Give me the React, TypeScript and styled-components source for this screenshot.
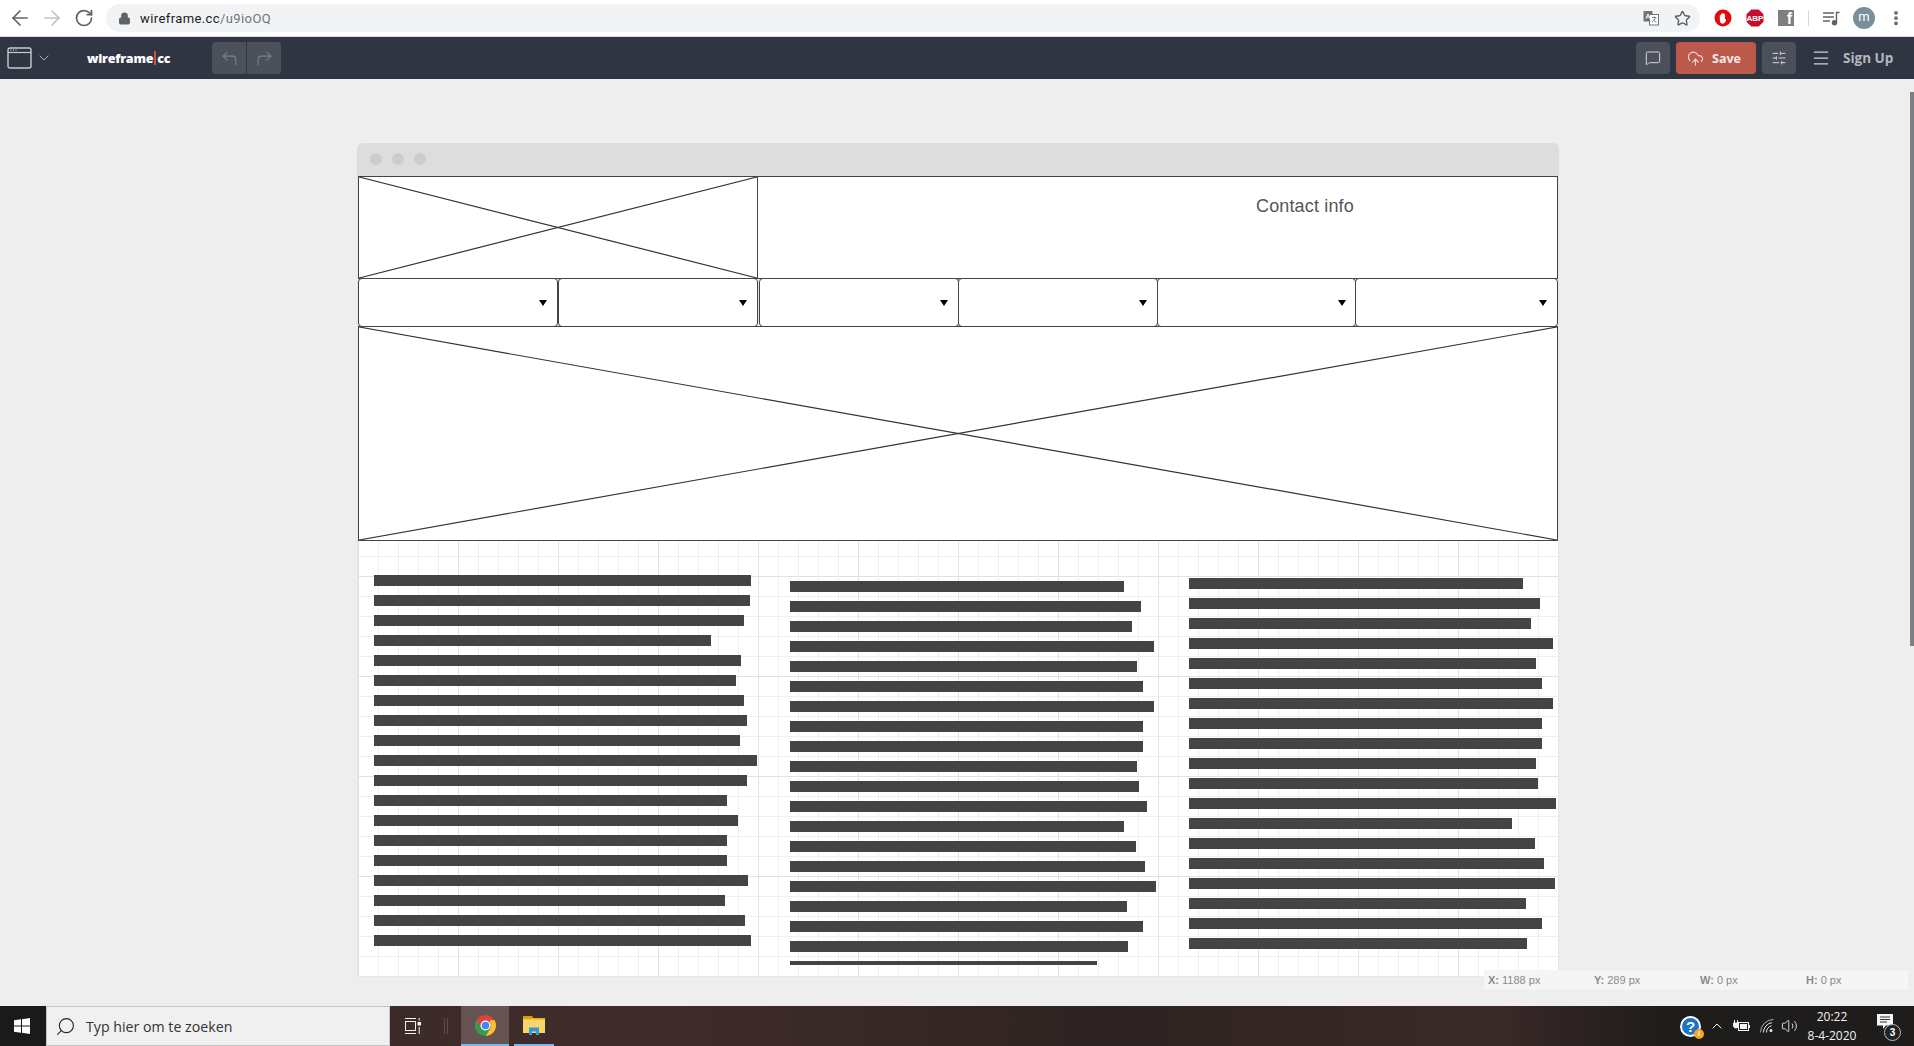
import styled, { createGlobalStyle } from "styled-components";
import {
  ArrowLeft,
  ArrowRight,
  ChevronDown,
  ChevronUp,
  CornerUpLeft,
  CornerUpRight,
  Lock,
  Menu,
  MessageSquare,
  MoreVertical,
  RotateCw,
  Search,
  SlidersHorizontal,
  Star,
  UploadCloud,
  Volume2,
} from "lucide-react";

const GlobalStyle = createGlobalStyle`
  html, body {
    margin: 0;
    padding: 0;
    overflow: hidden;
    background: #eee;
  }
`;

// right edges of the text bars, in page pixels
const COLUMNS = [
  {
    left: 374,
    top: 34,
    indent: 16,
    rights: [751, 750, 744, 711, 741, 736, 744, 747, 740, 757, 747, 727, 738, 727, 727, 748, 725, 745, 751],
  },
  {
    left: 790,
    top: 40,
    indent: 0,
    rights: [1124, 1141, 1132, 1154, 1137, 1143, 1154, 1143, 1143, 1137, 1139, 1147, 1124, 1136, 1145, 1156, 1127, 1143, 1128],
  },
  {
    left: 1189,
    top: 37,
    indent: 0,
    rights: [1523, 1540, 1531, 1553, 1536, 1542, 1553, 1542, 1542, 1536, 1538, 1556, 1512, 1535, 1544, 1555, 1526, 1542, 1527],
  },
];

const DROPDOWNS = [
  { width: 200, shift: 0, caret: 10 },
  { width: 200, shift: 0, caret: 10 },
  { width: 200, shift: 1, caret: 10 },
  { width: 200, shift: -1, caret: 10 },
  { width: 199, shift: -1, caret: 9 },
  { width: 203, shift: -1, caret: 10 },
];

function CrossLines() {
  return (
    <CrossSvg viewBox="0 0 100 100" preserveAspectRatio="none">
      <line x1="0" y1="0" x2="100" y2="100" vectorEffect="non-scaling-stroke" />
      <line x1="0" y1="100" x2="100" y2="0" vectorEffect="non-scaling-stroke" />
    </CrossSvg>
  );
}

function ChromeLogo() {
  return (
    <svg width="23" height="23" viewBox="0 0 48 48">
      <circle cx="24" cy="24" r="22" fill="#db4437" />
      <path d="M43 13A22 22 0 0 1 24 46l11-18-2-15z" fill="#fbc02d" />
      <path d="M5 13A22 22 0 0 0 24 46l11-19H14z" fill="#2e9e4f" />
      <circle cx="24" cy="24" r="10.500" fill="#fff" />
      <circle cx="24" cy="24" r="8" fill="#4285f4" />
    </svg>
  );
}

function WindowIcon() {
  return (
    <svg width="25" height="22" viewBox="0 0 25 22" fill="none">
      <rect x="1" y="1" width="23" height="20" rx="2" stroke="#c9cbce" strokeWidth="1.4" />
      <path d="M1 5.500h23" stroke="#c9cbce" strokeWidth="1.2" />
      <path d="M3.500 3.200h1M6 3.200h1M8.500 3.200h1" stroke="#c9cbce" strokeWidth="1.2" />
    </svg>
  );
}

function StopHand() {
  return (
    <svg width="18" height="18" viewBox="0 0 18 18">
      <circle cx="9" cy="9" r="8.500" fill="#e00b0b" />
      <path
        d="M5.800 9.500V6.600c0-.9 1.200-.9 1.200 0V5.200c0-.9 1.300-.9 1.300 0v-.6c0-.9 1.300-.9 1.300 0v.8c0-.8 1.300-.8 1.300 0v5.200c.3-.7 1.500-.5 1.200.4-.5 1.500-1.300 3.700-3.400 3.700-2.500 0-2.900-1.800-2.900-5.200z"
        fill="#fff"
      />
    </svg>
  );
}

function AbpBadge() {
  return (
    <svg width="18" height="18" viewBox="0 0 18 18">
      <polygon points="5.300,0.500 12.700,0.500 17.500,5.300 17.500,12.700 12.700,17.500 5.300,17.500 0.500,12.700 0.500,5.300" fill="#c70d2c" />
      <text x="9" y="12" textAnchor="middle" fontFamily="Liberation Sans, sans-serif" fontWeight="700" fontSize="8" fill="#fff">
        ABP
      </text>
    </svg>
  );
}

function TranslateIcon() {
  return (
    <svg width="16" height="16" viewBox="0 0 16 16">
      <rect x="0.500" y="1" width="9" height="10.500" fill="#70757a" />
      <rect x="6.500" y="4.500" width="9" height="10.500" fill="#fff" stroke="#70757a" />
      <path d="M3 8.500l2-4.500 2 4.500M3.700 7h2.600" stroke="#fff" strokeWidth="1" fill="none" />
      <path d="M9 7.500h4.500M11.200 6.500v1M12.500 7.500c-.5 2-2 3.500-3.500 4.500M10 9.500c.7 1.200 1.800 2 3.500 2.500" stroke="#70757a" strokeWidth="0.900" fill="none" />
    </svg>
  );
}

function PlaylistIcon() {
  return (
    <svg width="17" height="15" viewBox="0 0 17 15" fill="none" stroke="#5f6368" strokeWidth="1.400">
      <path d="M0 2h11M0 6h11M0 10h7" />
      <path d="M13.500 11.500V1.500h3" />
      <circle cx="11.500" cy="11.800" r="2" fill="#5f6368" />
    </svg>
  );
}

function TaskViewIcon() {
  return (
    <svg width="16" height="16" viewBox="0 0 16 16" fill="none" stroke="#f2f2f2" strokeWidth="1">
      <path d="M0 .5h11M0 15.500h11" />
      <rect x="0.500" y="3.500" width="10" height="9" />
      <rect x="13" y="4.500" width="2.500" height="2.500" fill="#f2f2f2" />
      <path d="M14.200 0v2.500M14.200 9v7" />
    </svg>
  );
}

function WindowsLogo() {
  return (
    <svg width="16" height="16" viewBox="0 0 16 16" fill="#fff">
      <path d="M0 2.300l7-1V7.500H0zM8 1.200L16 0v7.500H8zM0 8.500h7v6.200l-7-1zM8 8.500h8V16l-8-1.200z" />
    </svg>
  );
}

function FolderIcon() {
  return (
    <svg width="22" height="22" viewBox="0 0 22 22">
      <path d="M0 2h9l1.500 2H0z" fill="#d99a06" />
      <rect x="0" y="4" width="22" height="15" fill="#f8d568" />
      <rect x="0" y="4" width="22" height="1.500" fill="#e8ab15" />
      <path d="M6 21v-7.500h10V21h-3v-3.500H9V21z" fill="#2f9ad8" />
    </svg>
  );
}

function BatteryPlug() {
  return (
    <svg width="17" height="13" viewBox="0 0 17 13" fill="none" stroke="#f2f2f2">
      <path d="M1.500 0v3M4.500 0v3M0.500 3h5v2.500a2.500 2.500 0 0 1-5 0z" fill="#f2f2f2" />
      <rect x="5.500" y="2.500" width="10" height="8" />
      <rect x="7" y="4" width="7" height="5" fill="#f2f2f2" stroke="none" />
      <path d="M16.500 5v3" />
    </svg>
  );
}

function TrayWifi() {
  return (
    <svg width="14" height="14" viewBox="0 0 14 14" fill="none" stroke="#e8e8e8">
      <path d="M0.500 13.500A13 13 0 0 1 13.500 .5" opacity="0.7" />
      <path d="M3.500 13.500A10 10 0 0 1 12 3.600" />
      <path d="M6.500 13.500A7 7 0 0 1 11.500 6.800" />
      <circle cx="11" cy="11.500" r="1.500" fill="#e8e8e8" stroke="none" />
    </svg>
  );
}

function NotifyBubble() {
  return (
    <svg width="16" height="16" viewBox="0 0 16 16">
      <path d="M0 0h16v11.500H9L6 15v-3.500H0z" fill="#f5f5f5" />
      <path d="M3 3h10M3 5.500h10M3 8h7" stroke="#333" strokeWidth="1" />
    </svg>
  );
}

export default function App() {
  return (
    <>
      <GlobalStyle />
      <Page>
        <BrowserBar>
          <NavButton $left={8}><ArrowLeft size={24} color="#5f6368" strokeWidth={1.7} /></NavButton>
          <NavButton $left={8}><ArrowRight size={24} color="#c0c2c5" strokeWidth={1.7} /></NavButton>
          <NavButton $left={10}><RotateCw size={20} color="#5f6368" strokeWidth={2.1} /></NavButton>
          <UrlPill>
            <Lock size={13} color="#5f6368" fill="#5f6368" />
            <UrlText>
              wireframe.cc<UrlPath>/u9ioOQ</UrlPath>
            </UrlText>
            <UrlActions>
              <TranslateIcon />
              <Star size={17} color="#5f6368" strokeWidth={2} />
            </UrlActions>
          </UrlPill>
          <Extensions>
            <StopHand />
            <AbpBadge />
            <FacebookTile>f</FacebookTile>
            <BarDivider />
            <PlaylistIcon />
            <Avatar>m</Avatar>
            <MoreDots size={18} color="#5f6368" strokeWidth={3} />
          </Extensions>
        </BrowserBar>

        <AppToolbar>
          <WindowIcon />
          <WindowChevron size={16} color="#aeb1b6" strokeWidth={1.5} />
          <Logo>
            wireframe<LogoBar />cc
          </Logo>
          <UndoGroup>
            <UndoButton><CornerUpLeft size={19} color="#7e828a" strokeWidth={1.3} /></UndoButton>
            <UndoButton $divided><CornerUpRight size={19} color="#7e828a" strokeWidth={1.3} /></UndoButton>
          </UndoGroup>
          <ToolbarRight>
            <ToolButton><MessageSquare size={16} color="#d5d7da" strokeWidth={1.5} /></ToolButton>
            <SaveButton>
              <UploadCloud size={17} color="#f3dcd8" strokeWidth={1.6} />
              Save
            </SaveButton>
            <ToolButton><SlidersHorizontal size={16} color="#d5d7da" strokeWidth={1.5} /></ToolButton>
            <MenuIcon><Menu size={20} color="#d0d2d5" strokeWidth={1.5} /></MenuIcon>
            <SignUp>Sign Up</SignUp>
          </ToolbarRight>
        </AppToolbar>

        <Workspace>
          <WireWindow>
            <TitleBar>
              <Dot />
              <Dot />
              <Dot />
            </TitleBar>
            <Canvas>
              <HeaderRow>
                <LogoBox>
                  <CrossLines />
                </LogoBox>
                <ContactBox>Contact info</ContactBox>
              </HeaderRow>
              <NavRow>
                {DROPDOWNS.map((item, index) => (
                  <Dropdown key={index} $width={item.width} $shift={item.shift} $caret={item.caret}>
                    <Caret />
                  </Dropdown>
                ))}
              </NavRow>
              <Hero>
                <CrossLines />
              </Hero>
              <TextArea>
                {COLUMNS.map((column, index) => (
                  <TextColumn key={index} $top={column.top} $indent={column.indent}>
                    {column.rights.map((right, row) => (
                      <TextBar key={row} $width={right - column.left} />
                    ))}
                    {index === 1 && <ThinBar />}
                  </TextColumn>
                ))}
              </TextArea>
            </Canvas>
          </WireWindow>
          <StatusBar>
            <StatusItem><b>X:</b> 1188 px</StatusItem>
            <StatusItem><b>Y:</b> 289 px</StatusItem>
            <StatusItem><b>W:</b> 0 px</StatusItem>
            <StatusItem><b>H:</b> 0 px</StatusItem>
          </StatusBar>
          <ScrollThumb />
        </Workspace>

        <Taskbar>
          <StartTile><WindowsLogo /></StartTile>
          <SearchBox>
            <SearchGlass size={21} color="#222" strokeWidth={1.2} />
            Typ hier om te zoeken
          </SearchBox>
          <TaskIcon $width={46} $left={0}><TaskViewIcon /></TaskIcon>
          <TaskSeparator />
          <TaskIcon $width={48} $left={13} $open $active><ChromeLogo /></TaskIcon>
          <TaskIcon $width={40} $left={5} $open><FolderIcon /></TaskIcon>
          <Tray>
            <TrayItem $width={23} $left={0}>
              <HelpBadge>?<HelpDot>i</HelpDot></HelpBadge>
            </TrayItem>
            <TrayItem $width={16} $left={7}><ChevronUp size={18} color="#f2f2f2" strokeWidth={1.5} /></TrayItem>
            <TrayItem $width={17} $left={8}><BatteryPlug /></TrayItem>
            <TrayItem $width={14} $left={10}><TrayWifi /></TrayItem>
            <TrayItem $width={17} $left={7}><Volume2 size={18} color="#e8e8e8" strokeWidth={1.3} /></TrayItem>
            <Clock>
              <span>20:22</span>
              <span>8-4-2020</span>
            </Clock>
            <Notify>
              <NotifyBubble />
              <NotifyCount>3</NotifyCount>
            </Notify>
          </Tray>
        </Taskbar>
      </Page>
    </>
  );
}

const Page = styled.div`
  width: 1914px;
  height: 1046px;
  display: flex;
  flex-direction: column;
  overflow: hidden;
  background: #eee;
  font-family: "Liberation Sans", Arial, sans-serif;
`;

const BrowserBar = styled.div`
  height: 37px;
  flex: none;
  display: flex;
  align-items: center;
  background: #fff;
  box-sizing: border-box;
  border-bottom: 1px solid #d9dadc;
`;

const NavButton = styled.div<{ $left: number }>`
  display: flex;
  margin-left: ${({ $left }) => $left}px;
`;

const UrlPill = styled.div`
  width: 1594px;
  height: 28px;
  margin-left: 12px;
  padding: 0 9px 0 12px;
  box-sizing: border-box;
  display: flex;
  align-items: center;
  background: #f1f3f4;
  border-radius: 14px;
`;

const UrlText = styled.span`
  margin-left: 9px;
  font: 13px Roboto, sans-serif;
  letter-spacing: 0.4px;
  color: #202124;
`;

const UrlPath = styled.span`
  color: #70757a;
`;

const UrlActions = styled.div`
  margin-left: auto;
  display: flex;
  align-items: center;
  gap: 15px;
`;

const Extensions = styled.div`
  display: flex;
  align-items: center;
  margin-left: 14px;
  gap: 14px;
`;

const FacebookTile = styled.div`
  width: 16px;
  height: 16px;
  background: #7f7f7f;
  color: #fff;
  font: 700 16px/18px "Liberation Sans", sans-serif;
  text-align: right;
  padding-right: 2px;
  box-sizing: border-box;
  overflow: hidden;
`;

const BarDivider = styled.div`
  width: 1px;
  height: 16px;
  background: #d5d7da;
`;

const Avatar = styled.div`
  width: 22px;
  height: 22px;
  margin-left: -1px;
  border-radius: 50%;
  background: #78909c;
  color: #fff;
  font: 13px/20px Roboto, sans-serif;
  text-align: center;
`;

const MoreDots = styled(MoreVertical)`
  margin-left: -2px;
`;

const AppToolbar = styled.div`
  height: 42px;
  flex: none;
  display: flex;
  align-items: center;
  padding-left: 7px;
  background: #2f3542;
`;

const WindowChevron = styled(ChevronDown)`
  margin-left: 4px;
`;

const Logo = styled.div`
  width: 85px;
  margin-left: 35px;
  display: flex;
  align-items: center;
  font: 800 12.500px "Open Sans", sans-serif;
  letter-spacing: -0.2px;
  color: #fff;
`;

const LogoBar = styled.span`
  width: 2px;
  height: 14px;
  margin: 0 1px;
  background: #c9573f;
`;

const UndoGroup = styled.div`
  margin-left: 40px;
  height: 32px;
  display: flex;
  border-radius: 4px;
  overflow: hidden;
  background: #4b505b;
`;

const UndoButton = styled.div<{ $divided?: boolean }>`
  width: 34px;
  display: flex;
  align-items: center;
  justify-content: center;
  border-left: ${({ $divided }) => ($divided ? "1px solid #2f3542" : "none")};
`;

const ToolbarRight = styled.div`
  margin-left: auto;
  display: flex;
  align-items: center;
`;

const ToolButton = styled.div`
  width: 34px;
  height: 32px;
  display: flex;
  align-items: center;
  justify-content: center;
  border-radius: 4px;
  background: #4b505b;
`;

const SaveButton = styled.div`
  width: 80px;
  height: 32px;
  margin: 0 6px;
  padding-left: 11px;
  box-sizing: border-box;
  display: flex;
  align-items: center;
  gap: 8px;
  border-radius: 4px;
  background: #bb5a4b;
  color: #f7e9e6;
  font: 700 12.500px "Open Sans", sans-serif;
`;

const MenuIcon = styled.div`
  display: flex;
  margin-left: 15px;
`;

const SignUp = styled.div`
  width: 71px;
  margin-left: 12px;
  font: 700 13.500px "Open Sans", sans-serif;
  color: #b4b7bc;
`;

const Workspace = styled.div`
  flex: 1;
  position: relative;
  padding: 64px 0 0 357px;
  box-sizing: border-box;
`;

const WireWindow = styled.div`
  width: 1202px;
`;

const TitleBar = styled.div`
  height: 33px;
  box-sizing: border-box;
  padding: 10px 0 0 13px;
  display: flex;
  gap: 10px;
  background: #ddd;
  border-radius: 6px 6px 0 0;
`;

const Dot = styled.span`
  width: 12px;
  height: 12px;
  border-radius: 50%;
  background: #ccc;
`;

const Canvas = styled.div`
  height: 801px;
  box-sizing: border-box;
  border: solid #e6e6e6;
  border-width: 0 1px 1px;
  display: flex;
  flex-direction: column;
  background-color: #fff;
  background-image: linear-gradient(to right, #e2e2e2 1px, transparent 1px),
    linear-gradient(to bottom, #e2e2e2 1px, transparent 1px),
    linear-gradient(to right, #efefef 1px, transparent 1px),
    linear-gradient(to bottom, #efefef 1px, transparent 1px);
  background-size: 100px 100px, 100px 100px, 20px 20px, 20px 20px;
`;

const HeaderRow = styled.div`
  height: 103px;
  flex: none;
  display: flex;
`;

const LogoBox = styled.div`
  width: 400px;
  box-sizing: border-box;
  border: 1px solid #444;
  background: #fff;
`;

const ContactBox = styled.div`
  flex: 1;
  margin-left: -1px;
  padding: 18px 0 0 498px;
  box-sizing: border-box;
  border: 1px solid #444;
  background: #fff;
  font-size: 18px;
  line-height: 22px;
  letter-spacing: 0.15px;
  color: #555;
`;

const CrossSvg = styled.svg`
  display: block;
  width: 100%;
  height: 100%;

  line {
    stroke: #333;
    stroke-width: 1.2;
  }
`;

const NavRow = styled.div`
  height: 49px;
  flex: none;
  margin-top: -1px;
  display: flex;
`;

const Dropdown = styled.div<{ $width: number; $shift: number; $caret: number }>`
  width: ${({ $width }) => $width}px;
  margin-left: ${({ $shift }) => $shift}px;
  flex: none;
  box-sizing: border-box;
  display: flex;
  align-items: center;
  justify-content: flex-end;
  padding-right: ${({ $caret }) => $caret}px;
  border: 1px solid #444;
  border-radius: 4px;
  background: #fff;
`;

const Caret = styled.span`
  width: 0;
  height: 0;
  border-style: solid;
  border-width: 6px 4px 0;
  border-color: #000 transparent transparent;
`;

const Hero = styled.div`
  height: 215px;
  flex: none;
  margin-top: -1px;
  box-sizing: border-box;
  border: 1px solid #444;
  background: #fff;
`;

const TextArea = styled.div`
  flex: 1;
  display: grid;
  grid-template-columns: 432px 399px 1fr;
  overflow: hidden;
`;

const TextColumn = styled.div<{ $top: number; $indent: number }>`
  display: flex;
  flex-direction: column;
  gap: 9px;
  padding-top: ${({ $top }) => $top}px;
  padding-left: ${({ $indent }) => $indent}px;
`;

const TextBar = styled.div<{ $width: number }>`
  flex: none;
  width: ${({ $width }) => $width}px;
  height: 11px;
  background: #444;
`;

const ThinBar = styled.div`
  flex: none;
  width: 307px;
  height: 4px;
  background: #444;
`;

const StatusBar = styled.div`
  position: absolute;
  left: 1484px;
  top: 891px;
  width: 424px;
  height: 20px;
  display: flex;
  align-items: center;
  background: #f5f5f5;
  font-size: 11px;
  color: #8a8a8a;
`;

const StatusItem = styled.span`
  width: 106px;
  padding-left: 4px;
  box-sizing: border-box;
`;

const ScrollThumb = styled.div`
  position: absolute;
  right: 0;
  top: 13px;
  width: 4px;
  height: 554px;
  background: #7b7f86;
`;

const Taskbar = styled.div`
  height: 40px;
  flex: none;
  display: flex;
  align-items: stretch;
  background: linear-gradient(to right, #3a2928 0%, #3f2c2b 35%, #2e2322 58%, #3a2928 78%, #1f1c1c 87%);
`;

const StartTile = styled.div`
  width: 46px;
  display: flex;
  align-items: center;
  padding-left: 14px;
  box-sizing: border-box;
  background: #1a1a1a;
`;

const SearchBox = styled.div`
  width: 344px;
  box-sizing: border-box;
  padding-left: 8px;
  display: flex;
  align-items: center;
  gap: 10px;
  background: #f0f0f0;
  border: 1px solid #c6c6c6;
  font: 14.200px "Open Sans", sans-serif;
  color: #333;
`;

const SearchGlass = styled(Search)`
  transform: scaleX(-1);
`;

const TaskIcon = styled.div<{ $width: number; $left: number; $open?: boolean; $active?: boolean }>`
  width: ${({ $width }) => $width}px;
  margin-left: ${({ $left }) => $left}px;
  box-sizing: border-box;
  display: flex;
  align-items: center;
  justify-content: center;
  background: ${({ $active }) => ($active ? "#665250" : "transparent")};
  border-bottom: ${({ $open }) => ($open ? "2px solid #76b9ed" : "none")};
`;

const TaskSeparator = styled.div`
  width: 4px;
  height: 16px;
  align-self: center;
  margin-left: 8px;
  border: solid #5d4d4c;
  border-width: 0 1px;
  box-sizing: border-box;
`;

const Tray = styled.div`
  margin-left: auto;
  display: flex;
  align-items: center;
  padding-right: 13px;
`;

const TrayItem = styled.div<{ $width: number; $left: number }>`
  width: ${({ $width }) => $width}px;
  margin-left: ${({ $left }) => $left}px;
  display: flex;
  align-items: center;
  justify-content: center;
`;

const HelpBadge = styled.div`
  position: relative;
  flex: none;
  width: 21px;
  height: 21px;
  border-radius: 50%;
  background: #1b74c8;
  border: 2px solid #fff;
  box-sizing: border-box;
  color: #fff;
  font: 700 15px/17px "Liberation Sans", sans-serif;
  text-align: center;
`;

const HelpDot = styled.span`
  position: absolute;
  right: -5px;
  bottom: -4px;
  width: 10px;
  height: 10px;
  border-radius: 50%;
  background: #f5a623;
  font: 700 8px/10px "Liberation Sans", sans-serif;
`;

const Clock = styled.div`
  width: 54px;
  margin: 0 18px 0 7px;
  display: flex;
  flex-direction: column;
  align-items: center;
  gap: 2px;
  font: 12px "Open Sans", sans-serif;
  color: #f2f2f2;
`;

const Notify = styled.div`
  position: relative;
  width: 24px;
  height: 24px;
`;

const NotifyCount = styled.div`
  position: absolute;
  right: 0;
  bottom: -3px;
  width: 15px;
  height: 15px;
  border-radius: 50%;
  border: 1px solid #bbb;
  background: #222;
  color: #fff;
  font: 700 10px/15px "Liberation Sans", sans-serif;
  text-align: center;
`;
